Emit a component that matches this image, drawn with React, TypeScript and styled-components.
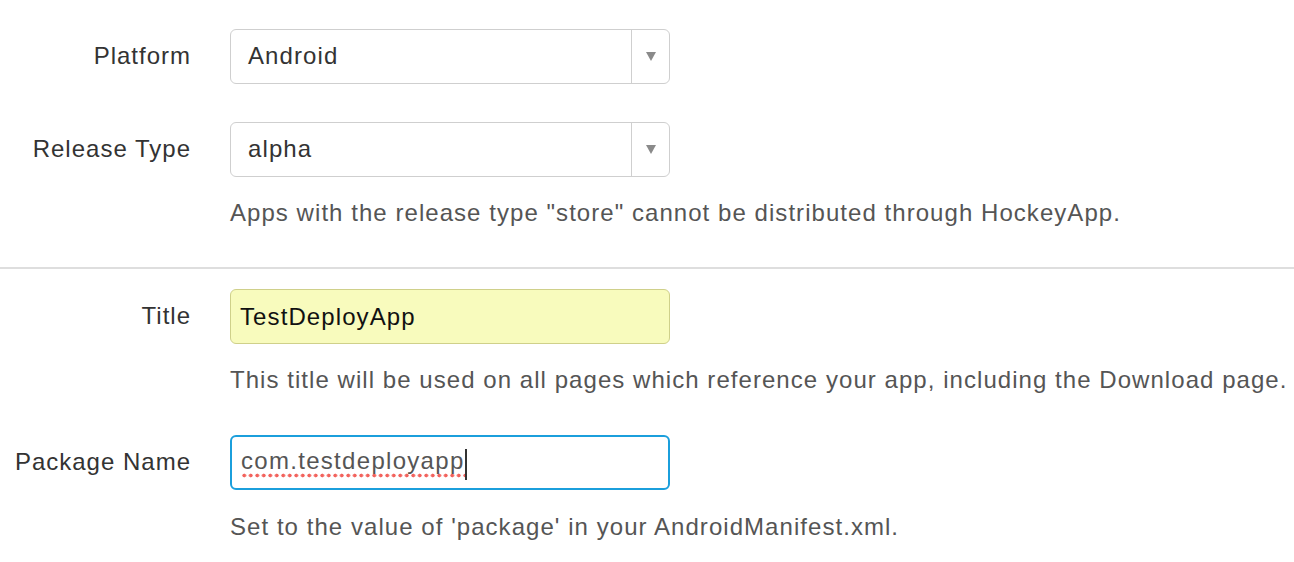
import React from "react";
import styled, { createGlobalStyle } from "styled-components";

const Global = createGlobalStyle`
  html, body { margin: 0; padding: 0; background: #fff; }
  body { font-family: "Liberation Sans", Arial, sans-serif; color: #333; }
`;

const Page = styled.div`
  padding-top: 29px;
  width: 1294px;
  overflow: hidden;
`;

const Row = styled.div<{ $mt?: number }>`
  display: grid;
  grid-template-columns: 190px 440px;
  column-gap: 40px;
  align-items: start;
  margin-top: ${(p) => p.$mt ?? 0}px;
`;

const Label = styled.div`
  font-size: 24px;
  letter-spacing: 1px;
  line-height: 54px;
  height: 55px;
  text-align: right;
  color: #333;
  white-space: nowrap;
  margin-right: -1px;
`;

const Field = styled.div`
  display: flex;
  flex-direction: column;
  min-width: 0;
`;

const SelectBox = styled.div`
  box-sizing: border-box;
  height: 55px;
  border: 1.5px solid #cfcfcf;
  border-radius: 6px;
  display: flex;
  align-items: stretch;
  background: #fff;
`;

const SelectValue = styled.div`
  flex: 1;
  padding-left: 17px;
  font-size: 24px;
  letter-spacing: 1.1px;
  line-height: 51px;
  color: #333;
`;

const SelectArrow = styled.div`
  width: 37px;
  border-left: 1.5px solid #cfcfcf;
  display: flex;
  align-items: center;
  justify-content: center;
  &::after {
    content: "";
    display: block;
    width: 0;
    height: 0;
    border-left: 5px solid transparent;
    border-right: 5px solid transparent;
    border-top: 9px solid #8a8a8a;
    margin-left: 1px;
  }
`;

const TextBox = styled.div<{ $variant: "filled" | "focus" }>`
  box-sizing: border-box;
  height: 55px;
  border-radius: 6px;
  padding-left: 9px;
  font-size: 24px;
  letter-spacing: 1.1px;
  display: flex;
  align-items: center;
  ${(p) =>
    p.$variant === "filled"
      ? `background: #f8fbbd; border: 1.5px solid #cfd08a; color: #111;`
      : `background: #fff; border: 2px solid #1b9fdc; color: #555;`}
`;

const Misspelled = styled.span`
  padding-bottom: 3px;
  background-image: radial-gradient(circle, #f2635d 1.7px, transparent 2.2px);
  background-size: 6.5px 5px;
  background-repeat: repeat-x;
  background-position: 0 100%;
  letter-spacing: 1.3px;
`;

const Caret = styled.span`
  display: inline-block;
  width: 2px;
  height: 31px;
  background: #333;
  margin-top: 4px;
`;

const Help = styled.div<{ $mt: number }>`
  margin-top: ${(p) => p.$mt}px;
  font-size: 24px;
  letter-spacing: 1.05px;
  line-height: 30px;
  color: #555;
  white-space: nowrap;
`;

const Divider = styled.hr`
  margin: 39px 0 20px;
  border: 0;
  height: 2px;
  background: #dedede;
`;

export default function App() {
  return (
    <>
      <Global />
      <Page>
        <Row>
          <Label>Platform</Label>
          <Field>
            <SelectBox>
              <SelectValue>Android</SelectValue>
              <SelectArrow />
            </SelectBox>
          </Field>
        </Row>
        <Row $mt={38}>
          <Label>Release Type</Label>
          <Field>
            <SelectBox>
              <SelectValue>alpha</SelectValue>
              <SelectArrow />
            </SelectBox>
            <Help $mt={21}>
              Apps with the release type "store" cannot be distributed through HockeyApp.
            </Help>
          </Field>
        </Row>
        <Divider />
        <Row>
          <Label>Title</Label>
          <Field>
            <TextBox $variant="filled">TestDeployApp</TextBox>
            <Help $mt={21}>
              This title will be used on all pages which reference your app, including the Download page.
            </Help>
          </Field>
        </Row>
        <Row $mt={40}>
          <Label>Package Name</Label>
          <Field>
            <TextBox $variant="focus">
              <Misspelled>com.testdeployapp</Misspelled>
              <Caret />
            </TextBox>
            <Help $mt={22}>Set to the value of 'package' in your AndroidManifest.xml.</Help>
          </Field>
        </Row>
      </Page>
    </>
  );
}
